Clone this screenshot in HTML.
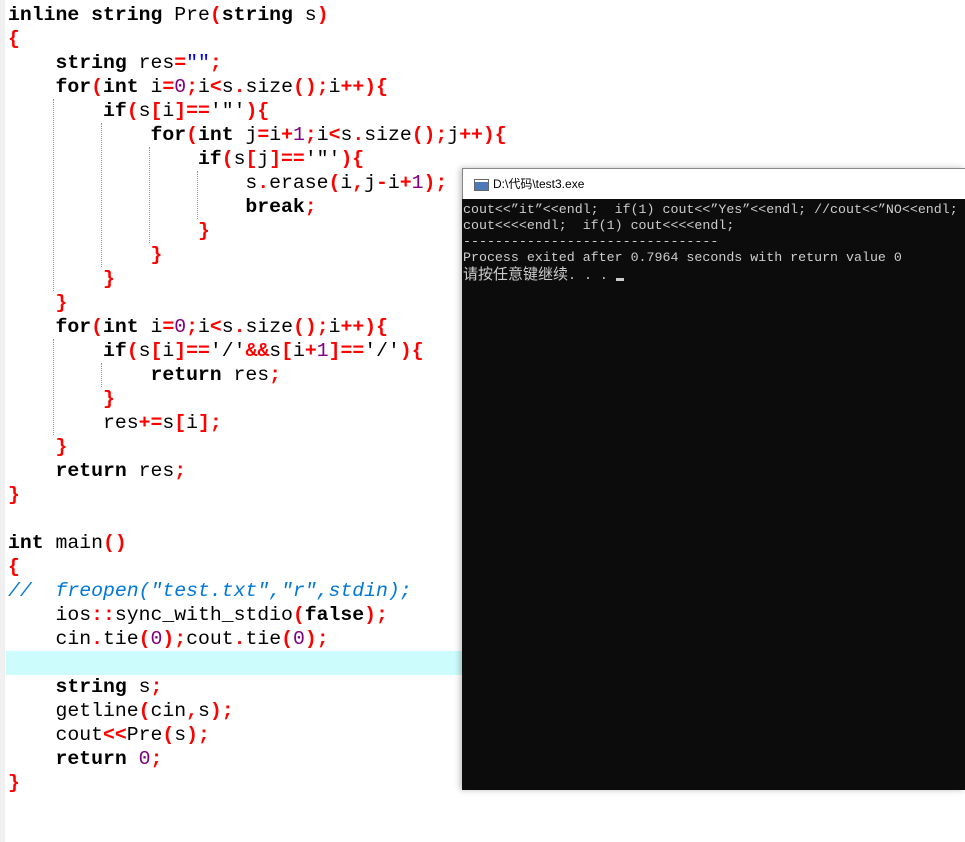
<!DOCTYPE html>
<html><head><meta charset="utf-8"><style>
body{margin:0;width:965px;height:842px;background:#fff;position:relative;overflow:hidden}
.gut{position:absolute;left:0;top:0;width:5px;height:842px;background:#f0f0f0}
.hl{position:absolute;left:6px;top:651px;width:460px;height:24px;background:#ccfcfc}
pre{position:absolute;left:8px;top:3px;margin:0;font-family:"Liberation Mono",monospace;font-size:19.8px;line-height:24px;color:#000}
.k{font-weight:bold}.o{color:#f00;font-weight:bold}.n{color:#800080}.s{color:#0000ff}.c{color:#0078d7;font-style:italic}
.g{position:absolute;border-left:1px dotted #999;width:0}
.win{position:absolute;left:462px;top:168px;width:503px;height:622px;background:#0c0c0c;box-shadow:-2px 0 6px rgba(0,0,0,.25)}
.tb{height:30px;background:#fff;border-left:1px solid #888;border-top:1px solid #888;font-family:"Liberation Sans","Noto Sans CJK SC",sans-serif;font-size:12px;line-height:30px;color:#000;padding-left:30px;position:relative}
.ic{position:absolute;left:11px;top:10px;width:13px;height:10px;border:1px solid #666;background:linear-gradient(#fff 0 2px,#4a7ab8 2px 100%)}
.con{font-family:"Liberation Mono","Noto Sans CJK SC",monospace;font-size:13.3px;line-height:16px;color:#cccccc;margin:0;padding:3px 0 0 1px;white-space:pre}
.cn{font-family:"Noto Sans CJK SC",sans-serif;font-size:15px}
.cur{display:inline-block;width:8px;height:3px;background:#cccccc;vertical-align:-2px}
</style></head><body>
<div class="gut"></div>
<div class="hl"></div>
<div class="g" style="left:53px;top:99px;height:192px"></div>
<div class="g" style="left:101px;top:123px;height:144px"></div>
<div class="g" style="left:149px;top:147px;height:96px"></div>
<div class="g" style="left:197px;top:171px;height:48px"></div>
<div class="g" style="left:53px;top:339px;height:96px"></div>
<div class="g" style="left:101px;top:363px;height:24px"></div>
<pre><span class="k">inline</span> <span class="k">string</span> Pre<span class="o">(</span><span class="k">string</span> s<span class="o">)</span>
<span class="o">{</span>
    <span class="k">string</span> res<span class="o">=</span><span class="s">""</span><span class="o">;</span>
    <span class="k">for</span><span class="o">(</span><span class="k">int</span> i<span class="o">=</span><span class="n">0</span><span class="o">;</span>i<span class="o">&lt;</span>s<span class="o">.</span>size<span class="o">();</span>i<span class="o">++){</span>
        <span class="k">if</span><span class="o">(</span>s<span class="o">[</span>i<span class="o">]==</span>'"'<span class="o">){</span>
            <span class="k">for</span><span class="o">(</span><span class="k">int</span> j<span class="o">=</span>i<span class="o">+</span><span class="n">1</span><span class="o">;</span>i<span class="o">&lt;</span>s<span class="o">.</span>size<span class="o">();</span>j<span class="o">++){</span>
                <span class="k">if</span><span class="o">(</span>s<span class="o">[</span>j<span class="o">]==</span>'"'<span class="o">){</span>
                    s<span class="o">.</span>erase<span class="o">(</span>i<span class="o">,</span>j<span class="o">-</span>i<span class="o">+</span><span class="n">1</span><span class="o">);</span>
                    <span class="k">break</span><span class="o">;</span>
                <span class="o">}</span>
            <span class="o">}</span>
        <span class="o">}</span>
    <span class="o">}</span>
    <span class="k">for</span><span class="o">(</span><span class="k">int</span> i<span class="o">=</span><span class="n">0</span><span class="o">;</span>i<span class="o">&lt;</span>s<span class="o">.</span>size<span class="o">();</span>i<span class="o">++){</span>
        <span class="k">if</span><span class="o">(</span>s<span class="o">[</span>i<span class="o">]==</span>'/'<span class="o">&amp;&amp;</span>s<span class="o">[</span>i<span class="o">+</span><span class="n">1</span><span class="o">]==</span>'/'<span class="o">){</span>
            <span class="k">return</span> res<span class="o">;</span>
        <span class="o">}</span>
        res<span class="o">+=</span>s<span class="o">[</span>i<span class="o">];</span>
    <span class="o">}</span>
    <span class="k">return</span> res<span class="o">;</span>
<span class="o">}</span>

<span class="k">int</span> main<span class="o">()</span>
<span class="o">{</span>
<span class="c">//  freopen("test.txt","r",stdin);</span>
    ios<span class="o">::</span>sync_with_stdio<span class="o">(</span><span class="k">false</span><span class="o">);</span>
    cin<span class="o">.</span>tie<span class="o">(</span><span class="n">0</span><span class="o">);</span>cout<span class="o">.</span>tie<span class="o">(</span><span class="n">0</span><span class="o">);</span>

    <span class="k">string</span> s<span class="o">;</span>
    getline<span class="o">(</span>cin<span class="o">,</span>s<span class="o">);</span>
    cout<span class="o">&lt;&lt;</span>Pre<span class="o">(</span>s<span class="o">);</span>
    <span class="k">return</span> <span class="n">0</span><span class="o">;</span>
<span class="o">}</span></pre>
<div class="win">
<div class="tb"><div class="ic"></div>D:\代码\test3.exe</div>
<div class="con">cout&lt;&lt;”it”&lt;&lt;endl;  if(1) cout&lt;&lt;”Yes”&lt;&lt;endl; //cout&lt;&lt;”NO&lt;&lt;endl;
cout&lt;&lt;&lt;&lt;endl;  if(1) cout&lt;&lt;&lt;&lt;endl;
--------------------------------
Process exited after 0.7964 seconds with return value 0
<span class="cn">请按任意键继续</span>. . . <span class="cur"></span></div>
</div>
</body></html>
